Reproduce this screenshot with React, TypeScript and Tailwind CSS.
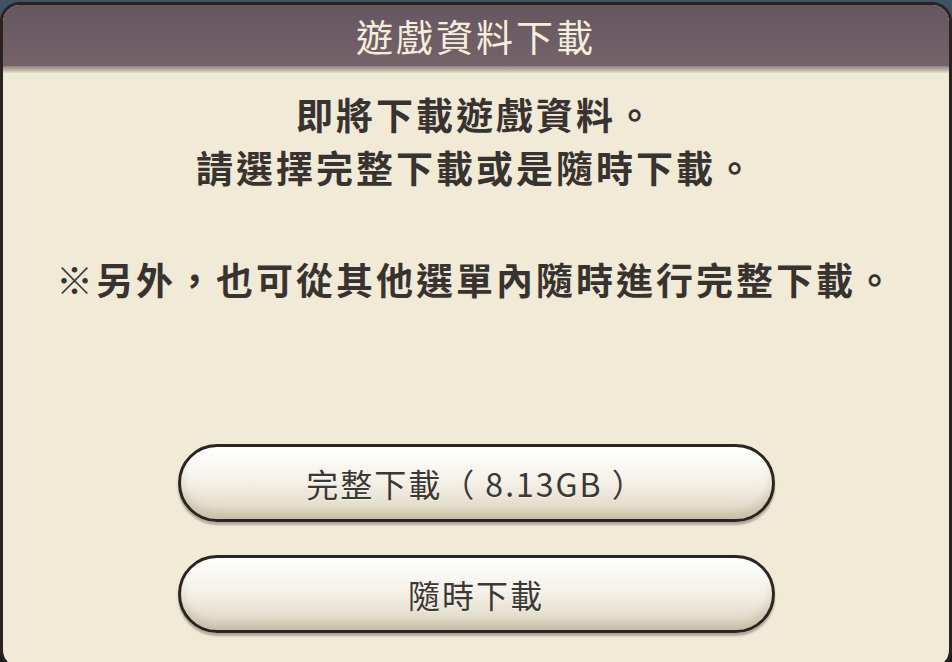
import React from "react";

const font = { fontFamily: '"Noto Sans CJK TC", "Noto Sans", sans-serif' };

function GlossyButton({ label }: { label: string }) {
  return (
    <button
      className="relative w-[597px] h-[78px] rounded-full border-[3px] border-[#2b2520] bg-gradient-to-b from-[#ffffff] via-[#f4f0e6] to-[#dcd3bd] shadow-[0_3px_2px_rgba(60,50,40,0.35),inset_0_-7px_9px_rgba(170,160,135,0.4),inset_0_4px_4px_rgba(255,255,255,0.9)] flex items-center justify-center"
      style={font}
    >
      <span className="text-[32px] leading-none text-[#3b3836] tracking-[2px] whitespace-pre [text-shadow:0_1px_0_rgba(255,255,255,0.6)]">
        {label}
      </span>
    </button>
  );
}

export default function App() {
  return (
    <div className="w-[952px] h-[662px] bg-gradient-to-b from-[#3d5566] via-[#2c2a28] to-[#1c1a18] overflow-hidden pt-[2px]" style={font}>
      <div className="w-[952px] h-[668px] rounded-[20px] border-[3px] border-[#2a221e] bg-[#f0ead7] overflow-hidden flex flex-col">
        <div className="h-[61px] shrink-0 bg-gradient-to-b from-[#655660] to-[#756369] flex items-center justify-center">
          <span className="text-[37px] leading-none text-[#f6eedd] tracking-[3px] inline-block pt-[1px]">
            遊戲資料下載
          </span>
        </div>
        <div className="h-[7px] shrink-0 bg-gradient-to-b from-[#8f7f7f] via-[#b8aca2] to-[#e6ddca]" />
        <div className="flex flex-col items-center pt-[15px] text-[#383330] font-bold">
          <p className="text-[37px] leading-[53px] tracking-[3px]">即將下載遊戲資料。</p>
          <p className="text-[37px] leading-[53px] tracking-[3px]">請選擇完整下載或是隨時下載。</p>
          <p className="text-[37px] leading-[53px] tracking-[3px] mt-[59px]">※另外，也可從其他選單內隨時進行完整下載。</p>
        </div>
        <div className="flex flex-col items-center gap-[33px] mt-[138px]">
          <GlossyButton label="完整下載（ 8.13GB ）" />
          <GlossyButton label="隨時下載" />
        </div>
      </div>
    </div>
  );
}
